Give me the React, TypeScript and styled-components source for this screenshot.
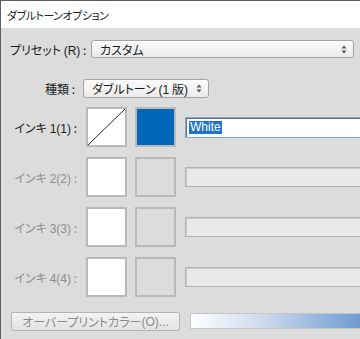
import styled, { createGlobalStyle } from 'styled-components'

const GlobalStyle = createGlobalStyle`
  html, body {
    margin: 0;
    padding: 0;
    background: #dcdcdc;
  }
  * {
    box-sizing: border-box;
  }
`

const uiFont = `'Noto Sans CJK JP', 'Liberation Sans', sans-serif`

const Window = styled.div`
  width: 360px;
  height: 339px;
  display: flex;
  flex-direction: column;
  overflow: hidden;
  border-top: 1px solid #5f5f5f;
  border-left: 1px solid #5f5f5f;
  background: #dcdcdc;
  font-family: ${uiFont};
  font-size: 12px;
  font-feature-settings: 'palt';
  color: #1b1b1b;
`

const TitleBar = styled.div`
  height: 27px;
  flex: none;
  display: flex;
  align-items: center;
  padding-left: 6px;
  background: #ffffff;
  font-size: 11px;
  letter-spacing: -0.5px;
  color: #222;
`

const Body = styled.div`
  flex: 1;
  display: flex;
  flex-direction: column;
  padding: 12px 0 0 9px;
`

const PresetRow = styled.div`
  display: flex;
  align-items: center;
  height: 18px;
`

const PresetLabel = styled.div`
  width: 81px;
  flex: none;
`

const TypeRow = styled.div`
  display: flex;
  align-items: center;
  height: 19px;
  margin-top: 21px;
`

const InkList = styled.div`
  display: flex;
  flex-direction: column;
  gap: 10px;
  margin-top: 9px;
`

const InkRow = styled.div`
  display: flex;
  align-items: center;
  height: 40px;
`

const SideLabel = styled.div<{ $disabled?: boolean }>`
  width: 68px;
  flex: none;
  text-align: right;
  padding-right: 1px;
  color: ${({ $disabled }) => ($disabled ? '#8e8e8e' : '#1b1b1b')};
  white-space: nowrap;
`

const Num = styled.span`
  font-family: 'Liberation Sans', sans-serif;
  font-size: 12px;
`

const Select = styled.div<{ $width: number; $height: number }>`
  width: ${({ $width }) => $width}px;
  height: ${({ $height }) => $height}px;
  flex: none;
  display: flex;
  align-items: center;
  justify-content: space-between;
  padding: 0 6px 0 8px;
  border: 1px solid #a3a3a3;
  border-radius: 3px;
  background: linear-gradient(#fbfbfb, #ebebeb);
  box-shadow: inset 0 1px 0 #ffffff;
  color: #1b1b1b;
  white-space: nowrap;
`

const SwatchGroup = styled.div`
  display: flex;
  gap: 8px;
  margin-left: 8px;
`

const Swatch = styled.div<{ $fill: string }>`
  position: relative;
  width: 41px;
  height: 40px;
  border: 2px solid #b9b9b9;
  background: ${({ $fill }) => $fill};
`

const Diagonal = styled.svg`
  position: absolute;
  inset: 0;
  width: 100%;
  height: 100%;
`

const NameInput = styled.div<{ $active?: boolean }>`
  width: 200px;
  flex: none;
  margin-left: 9px;
  height: ${({ $active }) => ($active ? 21 : 20)}px;
  display: flex;
  align-items: center;
  padding-left: 3px;
  border: 1px solid ${({ $active }) => ($active ? '#7fa9dc' : '#b3b3b3')};
  background: ${({ $active }) => ($active ? '#ffffff' : '#e9e9e9')};
  box-shadow: ${({ $active }) => ($active ? 'inset 1px 1px 0 #6d6d6d' : 'inset 1px 1px 0 #c9c9c9')};
`

const Selected = styled.span`
  background: #1f74cf;
  color: #ffffff;
  font-family: 'Liberation Sans', sans-serif;
  font-size: 12px;
  line-height: 13px;
  padding: 0 1px;
`

const BottomRow = styled.div`
  display: flex;
  align-items: center;
  margin-top: 15px;
  height: 19px;
`

const OverprintButton = styled.div`
  width: 169px;
  height: 19px;
  flex: none;
  margin-left: 1px;
  display: flex;
  align-items: center;
  justify-content: center;
  border: 1px solid #b4b4b4;
  border-radius: 2px;
  background: linear-gradient(#f3f3f3, #e3e3e3);
  color: #8a8a8a;
  white-space: nowrap;
`

const GradientBar = styled.div`
  width: 190px;
  height: 16px;
  flex: none;
  margin-left: 10px;
  margin-top: -1px;
  border: 1px solid #c6c6c6;
  background: linear-gradient(90deg, #ffffff 0%, #c9d8ec 40%, #5d8fcc 100%);
`

const UpDown = () => (
  <svg width="6" height="9" viewBox="0 0 6 9">
    <path d="M3 0.5 L5.5 3.5 L0.5 3.5 Z" fill="#555" />
    <path d="M0.5 5.5 L5.5 5.5 L3 8.5 Z" fill="#555" />
  </svg>
)

const inks = [
  { label: '1(1)', disabled: false },
  { label: '2(2)', disabled: true },
  { label: '3(3)', disabled: true },
  { label: '4(4)', disabled: true },
]

export default function App() {
  return (
    <>
      <GlobalStyle />
      <Window>
        <TitleBar>ダブルトーンオプション</TitleBar>
        <Body>
          <PresetRow>
            <PresetLabel>
              プリセット <Num>(R)</Num> :
            </PresetLabel>
            <Select $width={263} $height={18}>
              <span>カスタム</span>
              <UpDown />
            </Select>
          </PresetRow>

          <TypeRow>
            <SideLabel style={{ width: 66 }}>種類 :</SideLabel>
            <Select $width={126} $height={19} style={{ marginLeft: 7 }}>
              <span>
                ダブルトーン <Num>(1</Num> 版<Num>)</Num>
              </span>
              <UpDown />
            </Select>
          </TypeRow>

          <InkList>
            {inks.map((ink, i) => (
              <InkRow key={ink.label}>
                <SideLabel $disabled={ink.disabled}>
                  インキ <Num>{ink.label}</Num> :
                </SideLabel>
                <SwatchGroup>
                  <Swatch $fill="#ffffff">
                    {i === 0 && (
                      <Diagonal viewBox="0 0 37 36" preserveAspectRatio="none">
                        <line x1="0" y1="36" x2="37" y2="0" stroke="#2a2a2a" strokeWidth="1" />
                      </Diagonal>
                    )}
                  </Swatch>
                  <Swatch $fill={i === 0 ? '#0066b8' : '#dcdcdc'} />
                </SwatchGroup>
                <NameInput $active={!ink.disabled}>
                  {!ink.disabled && <Selected>White</Selected>}
                </NameInput>
              </InkRow>
            ))}
          </InkList>

          <BottomRow>
            <OverprintButton>
              オーバープリントカラー<Num>(O)...</Num>
            </OverprintButton>
            <GradientBar />
          </BottomRow>
        </Body>
      </Window>
    </>
  )
}
